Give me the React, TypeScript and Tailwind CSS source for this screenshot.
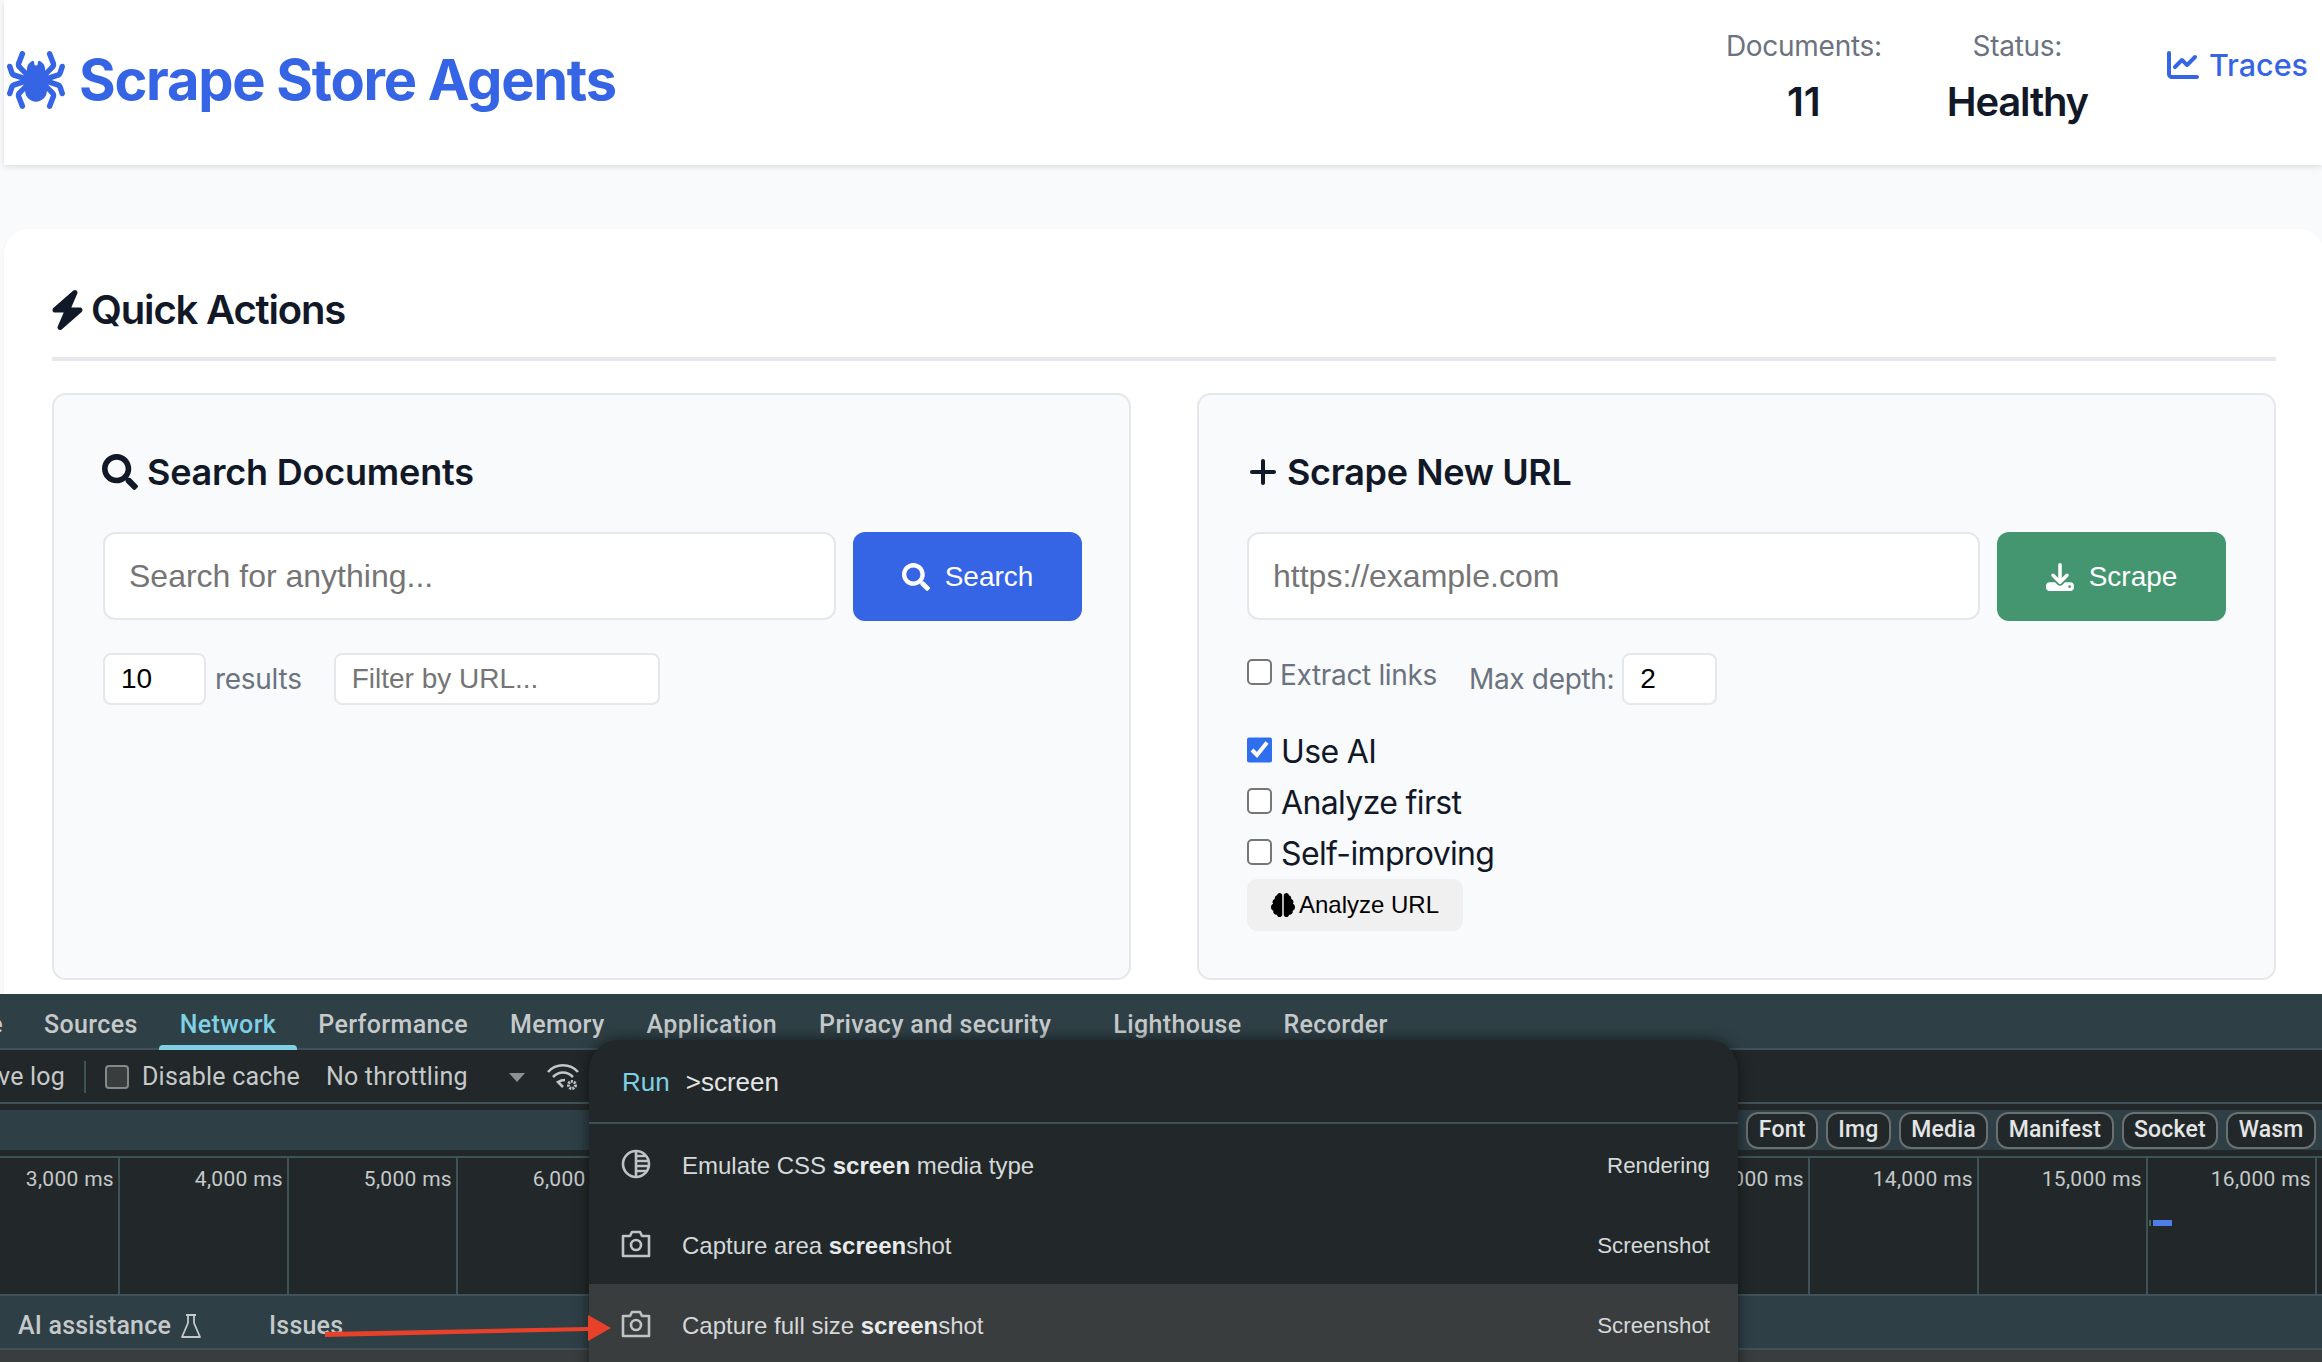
import { FaBolt, FaBrain, FaChartLine, FaDownload, FaPlus, FaSpider } from 'react-icons/fa6'
import { FaSearch } from 'react-icons/fa'

const inter = "font-['Inter',sans-serif]"
const helv = "font-['Liberation_Sans',Arial,sans-serif]"
const dev = "font-['Roboto',sans-serif]"

const tabs = [
  { name: 'Sources', cls: '' },
  { name: 'Network', cls: '', active: true },
  { name: 'Performance', cls: '' },
  { name: 'Memory', cls: '' },
  { name: 'Application', cls: '' },
  { name: 'Privacy and security', cls: 'mr-[20px]' },
  { name: 'Lighthouse', cls: '' },
  { name: 'Recorder', cls: '' },
]

const chips = ['Font', 'Img', 'Media', 'Manifest', 'Socket', 'Wasm']

const ticks = [
  '3,000', '4,000', '5,000', '6,000', '7,000', '8,000', '9,000',
  '10,000', '11,000', '12,000', '13,000', '14,000', '15,000', '16,000', '17,000',
]

function CameraIcon() {
  return (
    <svg width="30" height="30" viewBox="0 0 30 30" fill="none" stroke="#bfc3c4" strokeWidth="2.6">
      <path d="M2 7h7l2-4h8l2 4h7v20H2z" strokeLinejoin="round" />
      <circle cx="15" cy="16" r="5" />
    </svg>
  )
}

function HalfCircleIcon() {
  return (
    <svg width="30" height="30" viewBox="0 0 30 30" fill="none" stroke="#bfc3c4" strokeWidth="2.6">
      <circle cx="15" cy="15" r="13" />
      <path d="M15 2v26M15 7h10M15 12h12M15 17h12M15 22h10" />
    </svg>
  )
}

function WifiGearIcon() {
  return (
    <svg width="34" height="30" viewBox="0 0 34 30" fill="none" stroke="#c4c7c8" strokeWidth="2.6">
      <path d="M2 10C10 1 24 1 32 10" />
      <path d="M7 15c6-6 14-6 20 0" />
      <path d="M17 25l-5-5c3-2 5-2 7-2" />
      <circle cx="26" cy="23" r="3.5" strokeWidth="3" strokeDasharray="2 1" />
    </svg>
  )
}

function BeakerIcon() {
  return (
    <svg width="22" height="26" viewBox="0 0 22 26" fill="none" stroke="#c5c9ca" strokeWidth="1.8" strokeLinejoin="round">
      <path d="M6 2h10M8 2v8L2 24h18L14 10V2" />
    </svg>
  )
}

function Hit({ children }: { children: string }) {
  return <b className="font-bold text-[#e8eaeb]">{children}</b>
}

function PaletteRow({ icon, label, group, active }: { icon: React.ReactNode; label: React.ReactNode; group: string; active?: boolean }) {
  return (
    <div className={`flex h-[80px] shrink-0 items-center pl-[32px] pr-[28px] ${active ? 'bg-[#3a3d3e]' : ''}`}>
      <span className="mr-[31px] flex w-[30px] justify-center">{icon}</span>
      <span className="flex-1 pt-[3px] text-[24px] text-[#d5d8d9]">{label}</span>
      <span className="pt-[3px] text-[22.3px] text-[#d5d8d9]">{group}</span>
    </div>
  )
}

const emptyBox = 'm-0 h-[26px] w-[25px] appearance-none rounded-[5px] border-[2px] border-[#767676] bg-white'

function Check({ label, checked }: { label: string; checked?: boolean }) {
  return (
    <label className="flex h-[51px] items-center gap-[9px] text-[32px] tracking-[-0.02em] text-[#111827]">
      <input
        type="checkbox"
        defaultChecked={checked}
        className={`mb-[3px] ${checked ? 'm-0 h-[26px] w-[25px] accent-[#2f6fed]' : emptyBox}`}
      />
      {label}
    </label>
  )
}

export default function App() {
  return (
    <div className={`relative flex h-[1362px] w-[2322px] flex-col overflow-hidden bg-[#f9fafb] ${inter}`}>
      {/* page */}
      <div className="h-[994px] shrink-0 overflow-hidden bg-[#f9fafb] pl-[4px]">
        <header className="flex h-[165px] items-center bg-white pr-[14px] shadow-[0_2px_6px_rgba(0,0,0,0.12)]">
          <div className="mb-[6px] flex flex-1 items-center gap-[11px] text-[#3565e5]">
            <FaSpider className="h-[58px] w-[64px]" />
            <h1 className="text-[56px] font-bold leading-none tracking-[-0.0225em]">Scrape Store Agents</h1>
          </div>
          <div className="mb-[15px] flex flex-col items-center">
            <span className="text-[28px] tracking-[-0.01em] text-[#6b7280]">Documents:</span>
            <span className="mt-[11px] text-[40px] font-semibold leading-[48px] text-[#111827]">11</span>
          </div>
          <div className="mb-[15px] ml-[65px] flex flex-col items-center">
            <span className="text-[28px] tracking-[-0.01em] text-[#6b7280]">Status:</span>
            <span className="mt-[11px] text-[40px] font-semibold leading-[48px] tracking-[-0.03em] text-[#111827]">Healthy</span>
          </div>
          <a className="mb-[35px] ml-[79px] flex items-center gap-[10px] text-[30.5px] font-medium text-[#3565e5]">
            <FaChartLine className="h-[32px] w-[32px]" />
            Traces
          </a>
        </header>

        <section className="mt-[64px] h-[900px] w-[2320px] rounded-[24px] bg-white p-[48px] shadow-[0_1px_3px_rgba(0,0,0,0.05)]">
          <h2 className="flex h-[84px] items-center gap-[6px] border-b-[4px] border-[#e5e7eb] pb-[14px] text-[40px] font-semibold tracking-[-0.029em] text-[#111827]">
            <FaBolt className="-ml-[2px] h-[40px] w-[35px]" />
            Quick Actions
          </h2>

          <div className="mt-[32px] grid grid-cols-[1079px_1079px] gap-[66px]">
            {/* search card */}
            <div className="h-[587px] rounded-[14px] border-[2px] border-[#e5e7eb] bg-[#f9fafb] pl-[49px] pr-[47px] pt-[53px]">
              <h3 className="flex h-[48px] items-center gap-[9px] text-[36px] font-semibold tracking-[-0.006em] text-[#111827]">
                <FaSearch className="-ml-[1px] h-[36px] w-[36px]" />
                Search Documents
              </h3>
              <div className={`mt-[36px] flex gap-[17px] ${helv}`}>
                <input
                  placeholder="Search for anything..."
                  className="h-[88px] w-[733px] rounded-[12px] border-[2px] border-[#e5e7eb] bg-white px-[24px] text-[32px] outline-none placeholder:text-[#757575]"
                />
                <button className="flex h-[89px] w-[229px] items-center justify-center gap-[15px] rounded-[12px] bg-[#3565e5] text-[28px] text-white">
                  <FaSearch className="h-[28px] w-[28px]" />
                  Search
                </button>
              </div>
              <div className={`mt-[32px] flex items-center ${helv}`}>
                <input
                  type="number"
                  defaultValue={10}
                  className="h-[52px] w-[103px] rounded-[8px] border-[2px] border-[#e5e7eb] bg-white px-[16px] text-[28px] text-black outline-none"
                />
                <span className={`ml-[9px] text-[28px] tracking-[-0.01em] text-[#6b7280] ${inter}`}>results</span>
                <input
                  placeholder="Filter by URL..."
                  className="ml-[32px] h-[52px] w-[326px] rounded-[8px] border-[2px] border-[#e5e7eb] bg-white px-[16px] text-[28px] outline-none placeholder:text-[#757575]"
                />
              </div>
            </div>

            {/* scrape card */}
            <div className="h-[587px] rounded-[14px] border-[2px] border-[#e5e7eb] bg-[#f9fafb] px-[48px] pt-[53px]">
              <h3 className="flex h-[48px] items-center gap-[8px] text-[36px] font-semibold tracking-[-0.01em] text-[#111827]">
                <FaPlus className="h-[32px] w-[32px]" />
                Scrape New URL
              </h3>
              <div className={`mt-[36px] flex gap-[17px] ${helv}`}>
                <input
                  placeholder="https://example.com"
                  className="h-[88px] w-[733px] rounded-[12px] border-[2px] border-[#e5e7eb] bg-white px-[24px] text-[32px] outline-none placeholder:text-[#757575]"
                />
                <button className="flex h-[89px] w-[229px] items-center justify-center gap-[15px] rounded-[12px] bg-[#449670] text-[28px] text-white">
                  <FaDownload className="h-[28px] w-[28px]" />
                  Scrape
                </button>
              </div>
              <div className="mt-[32px] flex items-start text-[28px] tracking-[-0.012em] text-[#6b7280]">
                <label className="flex h-[44px] items-center gap-[8px]">
                  <input type="checkbox" className={`self-start mt-[6px] ${emptyBox}`} />
                  Extract links
                </label>
                <span className="ml-[32px] flex items-center gap-[8px]">
                  Max depth:
                  <input
                    type="number"
                    defaultValue={2}
                    className={`h-[52px] w-[95px] rounded-[8px] border-[2px] border-[#e5e7eb] bg-white px-[16px] text-[28px] text-black outline-none ${helv}`}
                  />
                </span>
              </div>
              <div className="mt-[21px] flex flex-col">
                <Check label="Use AI" checked />
                <Check label="Analyze first" />
                <Check label="Self-improving" />
              </div>
              <button className={`flex h-[52px] w-[216px] items-center justify-center gap-[4px] rounded-[10px] bg-[#f0f0f0] text-[24px] text-black ${helv}`}>
                <FaBrain className="h-[24px] w-[24px]" />
                Analyze URL
              </button>
            </div>
          </div>
        </section>
      </div>

      {/* devtools */}
      <div className={`flex flex-1 flex-col overflow-hidden bg-[#2e3f45] ${dev}`}>
        <nav className="flex h-[56px] shrink-0 items-stretch border-b-[2px] border-[#3f5258] text-[25px] font-medium tracking-[0.36px] text-[#c5c9ca]">
          <span className="flex w-[23px] shrink-0 items-center justify-end whitespace-nowrap pr-[20px] pt-[8px]">Console</span>
          {tabs.map((t) => (
            <span
              key={t.name}
              className={`relative flex items-center whitespace-nowrap px-[21px] pt-[8px] ${t.cls} ${t.active ? 'text-[#7fd0e4]' : ''}`}
            >
              {t.name}
              {t.active && <span className="absolute bottom-[-2px] left-0 right-0 h-[5px] rounded-t-[4px] bg-[#7fd0e4]" />}
            </span>
          ))}
        </nav>

        <div className="flex h-[54px] shrink-0 items-center border-b-[2px] border-[#3f5258] bg-[#222829] pt-[2px] text-[25px] tracking-[0.2px] text-[#c5c9ca]">
          <span className="flex w-[65px] shrink-0 justify-end whitespace-nowrap">Preserve log</span>
          <span className="ml-[19px] h-[32px] w-[2px] bg-[#3f5258]" />
          <span className="ml-[19px] h-[24px] w-[24px] rounded-[4px] border-[2px] border-[#858889] bg-[#3a3d3e]" />
          <span className="ml-[13px]">Disable cache</span>
          <span className="ml-[26px]">No throttling</span>
          <span className="ml-[41px] h-0 w-0 border-x-[8px] border-t-[9px] border-x-transparent border-t-[#8e9192]" />
          <span className="ml-[21px]">
            <WifiGearIcon />
          </span>
        </div>

        <div className="h-[6px] shrink-0 bg-[#222829]" />
        <div className="flex h-[40px] shrink-0 items-center justify-end gap-[8px] pr-[6px]">
          {chips.map((c) => (
            <span
              key={c}
              className="flex h-[37px] items-center rounded-[12px] border-[2px] border-[#6a6f70] bg-[#222829] px-[10.4px] pt-[1px] text-[23px] font-medium tracking-[0.2px] text-[#e3e5e6]"
            >
              {c}
            </span>
          ))}
        </div>
        <div className="h-[8px] shrink-0 border-b-[2px] border-[#3f5258] bg-[#222829]" />

        <div className="flex h-[136px] shrink-0 bg-[#222829] text-[21px] tracking-[0.3px] text-[#c5c9ca]">
          {ticks.map((t, i) => (
            <div
              key={t}
              className={`relative shrink-0 border-r-[2px] border-[#3f5258] pr-[4px] pt-[6px] text-right ${i === 0 ? 'w-[120px]' : 'w-[169px]'}`}
            >
              {t} ms
              {t === '16,000' && (
                <span className="absolute left-[1px] top-[62px] flex items-center gap-[2px]">
                  <span className="h-[6px] w-[2px] bg-[#3d6b48]" />
                  <span className="h-[6px] w-[19px] bg-[#4f7de8]" />
                </span>
              )}
            </div>
          ))}
        </div>

        <div className="flex h-[56px] shrink-0 items-center border-y-[2px] border-[#3f5258] pl-[18px] pt-[7px] text-[25px] font-medium tracking-[0.2px] text-[#c5c9ca]">
          <span>AI assistance</span>
          <span className="ml-[9px] flex"><BeakerIcon /></span>
          <span className="ml-[67px]">Issues</span>
        </div>
        <div className="flex-1 bg-[#3a3d3e]" />
      </div>

      {/* command menu */}
      <div className={`absolute left-[589px] top-[1040px] flex h-[340px] w-[1149px] flex-col overflow-hidden rounded-t-[30px] bg-[#222829] shadow-[0_0_14px_rgba(0,0,0,0.55)] ${helv}`}>
        <div className="flex h-[84px] shrink-0 items-center gap-[16px] border-b-[2px] border-[#3f5258] pl-[33px] pt-[3px] text-[26px]">
          <span className="font-medium text-[#7fd0e4]">Run</span>
          <span className="text-[#e3e5e6]">&gt;screen</span>
        </div>
        <PaletteRow
          icon={<HalfCircleIcon />}
          label={<>Emulate CSS <Hit>screen</Hit> media type</>}
          group="Rendering"
        />
        <PaletteRow
          icon={<CameraIcon />}
          label={<>Capture area <Hit>screen</Hit>shot</>}
          group="Screenshot"
        />
        <PaletteRow
          icon={<CameraIcon />}
          label={<>Capture full size <Hit>screen</Hit>shot</>}
          group="Screenshot"
          active
        />
      </div>

      {/* red annotation arrow */}
      <svg className="absolute left-[320px] top-[1310px]" width="300" height="36" viewBox="0 0 300 36">
        <path d="M5 22L268 17l0-12 23 13-23 13 0-10L5 27z" fill="#e8412a" />
      </svg>
    </div>
  )
}
